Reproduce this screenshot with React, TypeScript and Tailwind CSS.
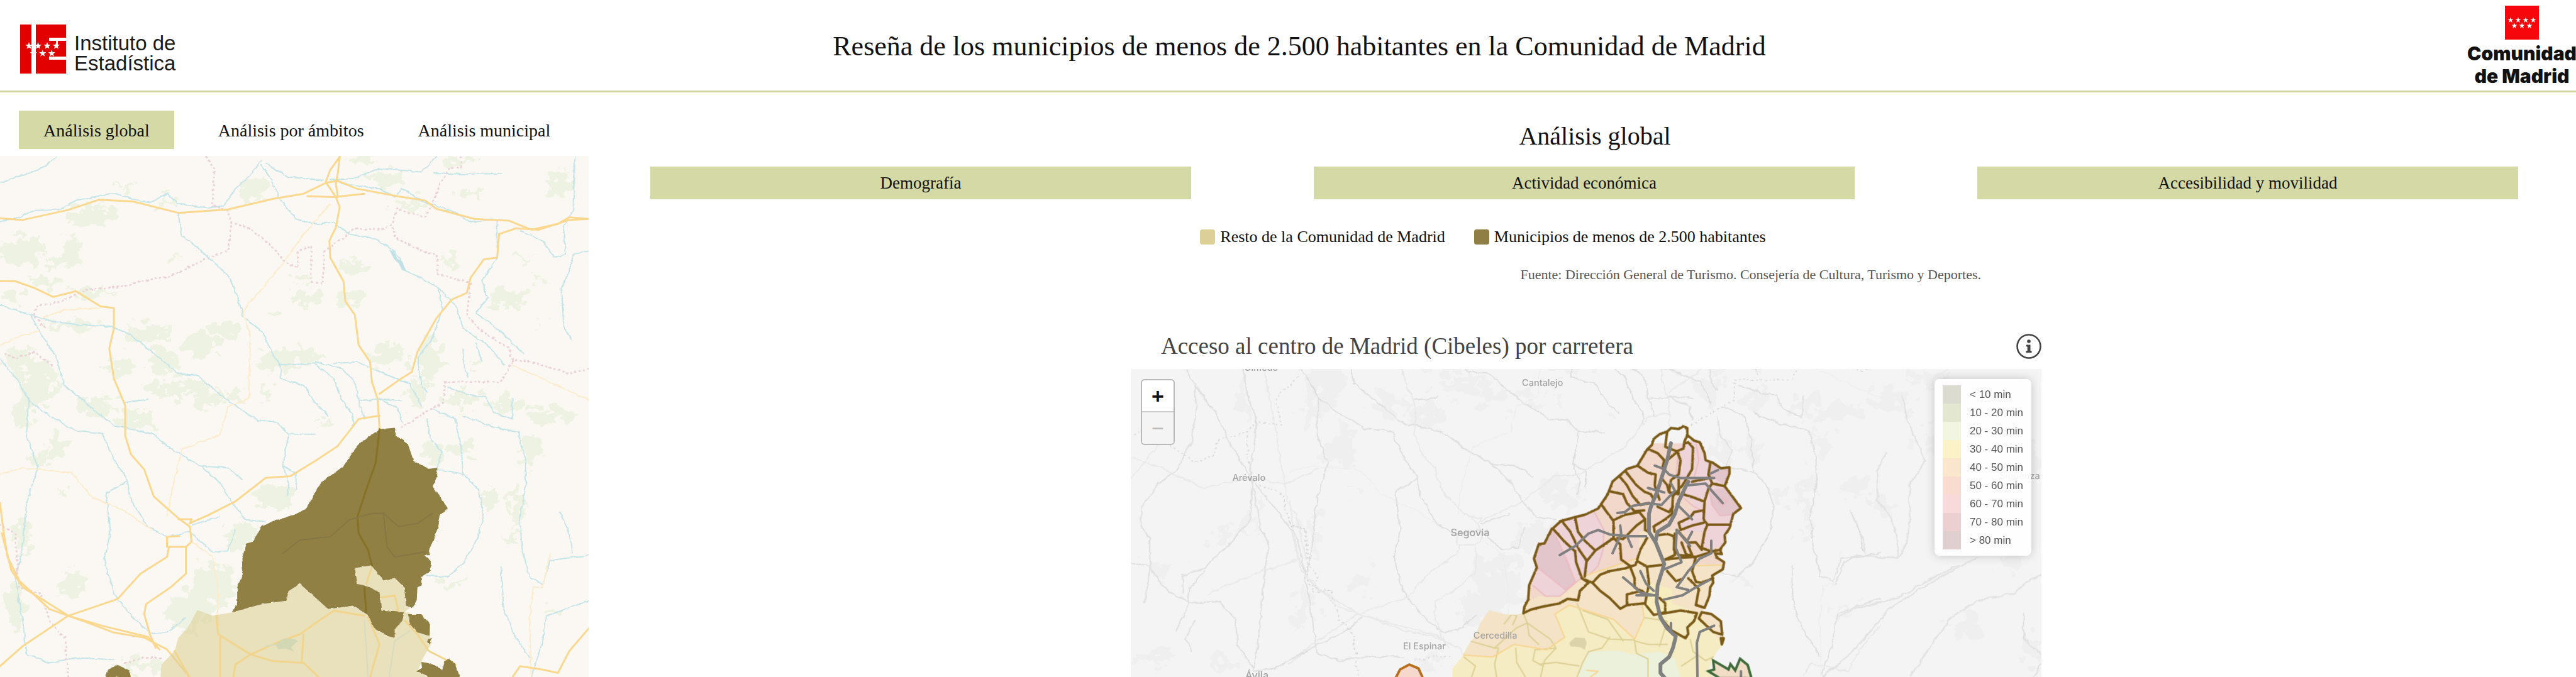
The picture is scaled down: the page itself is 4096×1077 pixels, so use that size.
import React from "react";

const serif = "font-['Liberation_Serif',serif]";

const rivers = [
  "0,97 60,75 110,55 150,20",
  "0,213 40,205 90,180 160,175 200,150 300,128 360,150 400,155 440,130 470,160 550,172 590,165 620,115 660,75 690,30",
  "470,190 478,255 520,290 570,340 605,380 630,450 640,495 690,540 720,610 740,640",
  "690,45 710,80 740,150 780,205 830,220 880,215 920,250 990,265 1040,300 1070,360 1150,405 1200,460 1220,530 1290,585 1330,640",
  "0,460 80,490 140,510 210,520 290,525 340,545 400,600 470,665 520,670 600,745 680,805 730,810 760,845 830,845",
  "80,490 105,540 150,620 170,700 240,765 300,820 400,843 460,895 530,940 580,990 610,1045 650,1100 700,1105",
  "0,620 50,690 75,745 130,790 200,835 270,845 300,920 335,980 345,1040 390,1120 440,1150 500,1135 560,1195 600,1190 620,1130",
  "75,745 70,850 100,940 70,1050 60,1180 40,1280 60,1400 70,1500 130,1525 200,1510 300,1515",
  "335,985 280,1020 290,1140 275,1220 300,1320 350,1390 400,1440 440,1435 490,1390",
  "740,640 740,680 800,700 830,750 865,790",
  "740,640 830,635 880,680 900,740 930,790 930,820",
  "830,630 900,650 935,690 945,745 960,800",
  "880,635 940,630 1000,660 1080,695 1110,760",
  "945,745 1000,740 1060,745",
  "1155,415 1165,470 1140,560 1100,620 1110,700 1125,720",
  "1310,210 1310,320 1270,390 1285,440 1255,485 1320,540 1380,605",
  "1515,20 1510,180 1485,230 1490,310 1460,320 1430,270 1370,240",
  "1553,300 1510,310 1500,360 1480,410 1485,520 1505,565",
  "870,90 930,85 1000,55 1110,65 1150,20",
  "700,40 760,80 850,90",
  "1145,68 1230,72 1320,70",
  "900,100 1000,115 1040,140 1060,115 1110,150 1200,185 1240,215 1310,205",
  "1180,705 1240,730 1280,735 1300,780 1350,800 1350,740",
  "1140,770 1200,800 1215,880 1220,960 1260,1010 1275,1080 1260,1150 1220,1230 1180,1270 1125,1265",
  "1220,790 1290,820 1365,840 1385,920 1385,1000 1370,1100 1375,1180 1395,1270 1430,1290 1450,1220 1553,1205",
  "1125,800 1135,860 1165,900 1150,950 1220,965",
  "1320,1240 1325,1360 1350,1430 1395,1510",
  "1553,1340 1440,1385 1430,1460 1400,1568",
  "760,850 745,940 780,960 780,1010",
  "745,940 762,990 757,1030",
  "530,940 600,945 640,980",
  "505,1115 580,1090",
  "330,750 390,742",
  "1475,1075 1500,1140 1508,1200",
  "1220,590 1222,640 1235,675",
  "1255,575 1270,630",
  "1000,740 1050,770 1060,810",
];

const roads = [
  "0,203 60,208 180,178 260,148 350,153 470,187 600,177 720,145 800,130 860,97 890,92 940,115 1050,138 1120,150 1150,175 1250,205 1340,210 1400,237 1470,220 1500,200 1553,205",
  "895,20 870,60 858,95 885,140 895,170 885,230 868,270 870,320 905,390 910,450 935,490 945,580 975,630 980,690 995,740 1000,830",
  "895,20 890,70 885,100 890,140",
  "0,390 40,390 90,410 140,437 200,420 265,465 300,470 300,530 288,590 300,680 330,760 330,850 345,905 380,950 405,1030 470,1095 500,1120 505,1165 490,1180 445,1180 440,1210 370,1260 310,1335 180,1385 60,1475 0,1535",
  "470,1098 505,1098 500,1110 550,1085 620,1045 700,975 765,970 830,925 890,880 945,800 1000,790",
  "1000,725 1050,685 1085,660 1100,600 1150,500 1190,445 1230,425 1240,380 1275,325 1310,320 1315,250 1360,233 1420,237 1500,208 1553,205",
  "0,1050 10,1140 20,1210 50,1280 130,1365 230,1405 300,1435 380,1450 440,1485 480,1540 500,1568",
  "5,1140 30,1250 60,1300 180,1385 270,1415 390,1448 420,1485",
  "490,1180 490,1260 450,1300 385,1350 380,1380 395,1440 410,1480",
  "440,1180 440,1150 472,1148",
  "810,137 880,140 960,130",
  "1350,1568 1370,1535 1430,1545 1470,1555 1500,1490 1553,1420",
];

const minorRoads = [
  "870,160 800,250 750,330 700,400 640,480 660,560 655,740 600,765 580,845 480,890 455,1000 440,1090",
  "0,580 60,550 105,540",
  "110,500 170,475 260,470",
  "0,965 60,945 190,960 240,1030 330,1075 400,1130",
  "1350,640 1430,680 1553,745",
  "500,1160 560,1210 575,1300 575,1440",
  "1400,1568 1395,1400 1405,1300 1430,1300 1450,1200",
];

const borders = [
  "545,20 565,60 560,165 600,180 610,220 600,300 550,320 450,375 370,390 330,405 230,415 160,450 95,465 90,495 120,530",
  "135,640 90,600 40,620 5,600",
  "610,215 660,235 700,270 760,340 785,350 785,300 820,285 820,390 850,400 855,300 900,265 930,235 1010,235 1035,220 1045,175 1120,200 1140,160 1160,100 1185,55 1215,50 1215,20",
  "1035,230 1040,260 1110,300 1150,310 1155,370 1240,395 1230,490 1270,540 1340,590 1350,625 1400,630 1500,665 1553,650",
  "1350,630 1320,690 1170,690 1170,750 1120,780 1050,830",
  "0,1115 40,1140 50,1300 110,1320 130,1400 170,1450 180,1568",
  "330,1525 380,1510 430,1510",
];

// cx, cy, rx, ry
const woods = [
  [60, 300, 60, 42], [240, 195, 70, 30], [190, 300, 30, 40], [120, 390, 36, 16], [35, 430, 26, 16], [245, 425, 60, 12],
  [190, 520, 80, 15], [100, 690, 48, 70], [50, 620, 40, 34], [385, 545, 66, 26], [430, 630, 36, 42], [530, 580, 50, 36],
  [600, 530, 40, 24], [760, 615, 80, 26], [715, 640, 32, 18], [320, 640, 40, 28], [450, 710, 64, 24], [545, 740, 40, 26],
  [260, 760, 56, 24], [360, 800, 50, 28], [150, 880, 20, 50], [100, 920, 30, 20], [60, 780, 22, 50], [670, 120, 32, 36],
  [1010, 85, 50, 22], [1080, 160, 54, 12], [1240, 130, 34, 14], [1480, 100, 36, 42], [1190, 325, 18, 24], [1340, 440, 45, 26],
  [930, 345, 30, 22], [930, 440, 42, 20], [810, 440, 42, 20], [790, 385, 22, 14], [1020, 610, 46, 36], [1130, 620, 38, 58],
  [1220, 740, 45, 20], [1340, 760, 46, 24], [1450, 790, 60, 26], [1400, 890, 22, 50], [1215, 890, 36, 18], [1100, 720, 28, 45],
  [720, 1030, 56, 38], [640, 1150, 44, 46], [560, 1290, 60, 60], [500, 1370, 55, 60], [40, 1360, 24, 70], [190, 1290, 30, 42],
  [1140, 900, 28, 38], [1290, 1040, 18, 34], [1360, 1060, 20, 60], [60, 1150, 20, 50], [370, 1530, 50, 18], [1190, 1290, 32, 11],
  [1460, 1370, 22, 10], [430, 155, 30, 11], [330, 105, 22, 7], [460, 318, 11, 9], [720, 490, 24, 14], [1380, 320, 24, 8],
  [1415, 390, 9, 12], [1415, 520, 9, 14], [620, 730, 22, 24], [850, 810, 14, 12], [700, 720, 12, 24], [170, 1020, 9, 9],
  [1345, 1160, 24, 12], [950, 30, 36, 11], [1210, 30, 46, 10], [1250, 640, 9, 14], [150, 330, 26, 14], [520, 700, 22, 18],
];

const olive =
  "611,1375 625,1345 625,1300 640,1260 637,1215 650,1170 665,1165 690,1120 720,1103 775,1085 805,1068 845,990 905,940 935,890 950,870 1000,830 1040,826 1045,850 1075,875 1090,925 1130,948 1152,945 1152,970 1140,1000 1180,1065 1160,1085 1155,1120 1140,1165 1130,1190 1133,1205 1118,1205 1135,1222 1135,1250 1110,1270 1110,1295 1100,1300 1098,1340 1085,1362 1070,1355 1065,1300 1040,1272 1010,1280 980,1235 935,1243 942,1290 975,1300 1000,1315 1005,1370 1065,1375 1060,1400 1040,1425 1040,1450 1020,1445 985,1420 970,1383 930,1355 865,1365 805,1305 790,1290 760,1312 755,1340 690,1350";

const oliveBits = [
  "1075,1380 1110,1380 1133,1410 1132,1445 1100,1435 1080,1410",
  "1130,1455 1138,1450 1133,1470 1127,1465",
  "1097,1550 1112,1540 1110,1522 1140,1528 1165,1547 1172,1520 1183,1513 1200,1530 1212,1568 1130,1568",
  "278,1568 285,1545 310,1531 340,1548 343,1568",
];

const sand =
  "520,1368 560,1385 611,1375 690,1350 755,1340 760,1312 790,1290 805,1305 865,1365 930,1355 970,1383 985,1420 1020,1445 1040,1450 1040,1425 1060,1400 1065,1375 1080,1375 1080,1410 1100,1435 1132,1445 1138,1465 1115,1510 1100,1550 1130,1568 423,1568 425,1530 460,1490 470,1450 495,1420";

const sandEnclave =
  "935,1243 980,1235 1010,1280 1040,1272 1065,1300 1070,1355 1080,1362 1065,1375 1005,1370 1000,1315 975,1300 942,1290";

const westLines = [
  "210,215 240,280 245,370 230,520 185,650 120,720 65,820 65,900 95,960 95,1100 75,1240",
  "395,215 410,330 440,430 430,560 420,650 425,760 420,870 360,970 270,1090 200,1120 200,1200",
  "240,290 310,410 360,560 420,690 500,830 570,950 600,1120",
  "30,1070 90,1080 150,1190 220,1240 320,1240 370,1310 380,1430 430,1530",
  "430,740 450,900 480,990 460,1150 455,1280 440,1450 430,1540 500,1530 620,1440 740,1360 780,1300",
  "220,1240 180,1360",
  "270,1100 220,1180 215,1240",
  "240,1320 210,1400 230,1450",
];

const westFaint = [
  "30,600 80,620 270,735 420,690 530,720 640,650",
  "30,700 120,550",
  "465,215 500,470 540,800 570,860 600,1050",
  "280,1200 440,1110 580,1050",
];

const westDots = [
  "30,510 70,480",
  "160,550 240,620 300,600 310,530 410,490 440,440 520,460 500,340 580,240",
  "410,490 410,600 420,640",
  "450,720 520,760 550,900 600,920 610,1080 640,1120 620,1190 690,1190",
];

const eastLines = [
  "1035,330 1060,460 1110,620 1060,720 1060,900 1050,980 1025,1045 890,1030 850,1060 820,1160",
  "985,580 955,660 955,790 1000,860 1020,950 1025,1040",
  "870,840 910,960 915,1020",
  "830,1300 880,1270 1020,1220 1110,1150 1220,1075",
  "780,1568 880,1450 1000,1260 1130,1150 1280,1040",
  "1060,1568 1130,1430 1200,1300 1280,1230 1400,1200 1450,1140 1500,1120",
  "1430,1290 1430,1400 1500,1480 1460,1568",
];

const greyWest = [
  [130, 1100, 45, 36], [330, 950, 36, 36], [400, 350, 18, 110], [720, 560, 46, 56], [100, 1480, 56, 36], [320, 1500, 46, 30],
  [1200, 1150, 50, 110], [420, 880, 20, 70],
];

const greyEast = [
  [1000, 350, 70, 44], [1120, 520, 30, 50], [880, 730, 46, 40], [960, 820, 46, 40], [1380, 1050, 46, 46], [1250, 1350, 50, 50],
  [1460, 1450, 46, 56], [1110, 260, 60, 22], [1440, 600, 36, 80],
];

// limits of the region, clockwise from the western corner
const province =
  "250,1155 255,1120 275,1080 280,1000 320,900 305,850 330,770 360,765 395,690 445,640 520,618 570,605 640,570 690,490 715,420 790,350 845,330 895,240 920,215 930,180 960,155 1000,140 1020,120 1060,125 1085,110 1105,120 1105,160 1140,190 1170,200 1195,260 1200,300 1240,315 1280,345 1325,340 1325,375 1300,445 1345,510 1385,568 1345,600 1325,680 1300,720 1303,760 1275,800 1285,825 1250,820 1260,845 1297,870 1290,910 1235,945 1240,985 1225,1010 1220,1060 1195,1130 1170,1150 1235,1160 1285,1210 1290,1270 1300,1320 1260,1370 1235,1420 1215,1480 1240,1514 -120,1514 -120,1464 -72,1400 -32,1324 0,1280 25,1210 72,1138 150,1160 210,1165";

const northEdge =
  "250,1155 255,1120 275,1080 280,1000 320,900 305,850 330,770 360,765 395,690 445,640 520,618 570,605 640,570 690,490 715,420 790,350 845,330 895,240 920,215 930,180 960,155 1000,140 1020,120 1060,125 1085,110 1105,120 1105,160 1140,190 1170,200 1195,260 1200,300 1240,315 1280,345 1325,340 1325,375 1300,445 1345,510 1385,568 1345,600 1325,680 1300,720 1303,760 1275,800 1285,825 1250,820 1260,845 1297,870 1290,910 1235,945 1240,985 1225,1010 1220,1060 1195,1125 1150,1110";

const bands = [
  { fill: "#f4e3c7", points: "-150,1390 90,1400 200,1330 370,1360 465,1290 415,1160 490,1110 720,1190 830,1300 880,1180 870,1110 1000,1100 1030,1100 1160,1150 1300,1340 1400,1340 1400,0 -150,0" },
  { fill: "#f1d8ca", points: "250,1100 330,1060 440,1060 560,950 850,845 855,700 900,690 960,700 1050,690 1060,800 1150,880 1400,885 1400,200 600,200 200,700" },
  { fill: "#eed3d8", points: "300,1000 365,1060 440,1060 550,960 640,890 670,830 660,650 620,590 530,600 400,670 290,800" },
  { fill: "#e3c5cc", points: "400,690 440,770 520,980 470,1025 330,905 300,850 320,740" },
  { fill: "#eed3d8", points: "1060,240 1045,400 1100,420 1090,500 1140,540 1140,580 1060,650 1100,700 1190,700 1180,790 1300,780 1400,560 1330,330 1200,310 1150,190 1060,205" },
  { fill: "#e3c5cc", points: "1215,470 1310,450 1390,568 1345,605 1275,610 1230,550" },
  { fill: "#e3c5cc", points: "1215,320 1325,335 1300,440 1215,380" },
  { fill: "#f6ecbe", points: "890,980 960,1000 1025,1020 1025,1130 960,1160 885,1110" },
  { fill: "#ecf1dc", points: "590,1370 740,1365 820,1385 960,1370 1040,1410 1070,1514 530,1514" },
  { fill: "#f4f4f4", points: "900,0 1120,0 1120,205 900,205" },
];

const softBorders = [
  "270,1210 390,1300 420,1350 360,1420 340,1512",
  "530,1100 560,1180 590,1260 700,1300 830,1305",
  "250,1155 270,1210 280,1280 330,1330",
  "-30,1310 100,1350 120,1350 100,1440 110,1512",
  "100,1350 210,1240 270,1210",
  "150,1215 190,1160 215,1170 195,1220",
  "210,1350 215,1430 260,1512",
  "420,1350 310,1360 300,1420 350,1450",
  "590,1370 560,1430 530,1512",
  "830,1310 840,1380 900,1410 900,1512",
  "1000,1330 900,1330 830,1310",
  "560,1140 690,1190 770,1310",
  "1120,1300 1135,1370 1200,1420 1240,1400",
  "700,1290 660,1350 590,1370",
  "1075,1450 1160,1390",
  "880,1180 1000,1200 960,1340",
  "-60,1400 0,1450 -20,1512",
  "340,1440 420,1430 540,1450",
];

const limits = [
  "250,1155 290,1135 345,1120 440,1100 480,1075 535,1083 545,1030 590,985 555,960",
  "410,690 460,750 520,810 525,870 555,960 610,985 650,940 700,920 780,905 835,885 860,800 895,735",
  "450,640 495,700 540,800 580,860 570,950",
  "520,620 535,700 570,750 625,805 580,865",
  "625,805 680,765 720,735",
  "655,545 685,590 720,640 720,735 755,770 760,855 805,890",
  "705,475 770,490 790,540 830,585 880,580",
  "720,635 780,605 855,590 885,630 840,665 790,720 770,740 740,735",
  "885,630 885,690 905,700",
  "755,395 790,440 820,500 860,550 905,540",
  "785,365 840,440 880,475 915,490 930,520",
  "845,330 900,370 940,380 935,440 960,520",
  "905,240 950,260 985,300 975,345",
  "1000,140 995,180 990,225 1050,250 1085,235 1090,195 1105,160",
  "1050,255 1000,300 985,340",
  "1055,260 1070,300 1060,380 1020,410 1010,470 1030,500 1080,440 1130,350 1135,230 1110,200 1090,205",
  "970,400 1000,440 1010,480 1060,490",
  "1060,410 1060,480",
  "1225,315 1215,380 1235,430 1300,445",
  "1215,400 1130,420",
  "1235,430 1215,460 1195,530 1190,630 1210,660 1330,660",
  "1080,490 1130,505 1190,530",
  "1210,660 1195,700 1180,790 1230,810 1280,800",
  "1190,580 1140,590 1120,620 1060,650 1070,690 1130,665 1190,650",
  "1030,500 1025,600 990,630 930,670 935,700",
  "1040,710 1035,800 1060,830 1150,840 1240,810",
  "1050,690 1110,760 1150,760 1180,800",
  "1075,760 1100,830 1130,830 1110,780",
  "950,560 1010,590 1030,560",
  "945,720 1000,712 1035,725 1040,830 990,855",
  "845,865 895,895 975,885",
  "805,890 830,960 830,1010 880,1040",
  "895,900 905,990 885,1100 790,1110 790,1050 870,1030",
  "610,985 650,1030 700,1070 755,1130 790,1110",
  "885,1105 930,1165 990,1150 990,1100 960,1070",
  "990,855 1075,845 1150,840 1130,920 1150,980 1180,985 1240,960",
  "1000,920 1045,975 1080,965",
  "1110,960 1165,1020 1150,1110 1195,1125",
  "960,1160 1070,1140 1155,1155 1140,1200 1105,1235 1110,1270 1095,1295 1020,1250 980,1200 960,1160",
  "1180,1150 1230,1160 1280,1200 1287,1275 1240,1260 1200,1220 1165,1185 1180,1150",
  "1280,1295 1295,1295 1285,1330 1280,1295",
];

const mainRoads = [
  "1020,205 1000,300 985,350 950,470 915,560 905,600 905,700 940,760 985,880 950,1000 945,1090 965,1180 1000,1240 1045,1285 1030,1350 1010,1400 965,1440 965,1490 985,1514",
  "1110,420 1100,440 1060,530 1040,600 1010,660 950,700 940,750",
];

const access = [
  "1245,400 1130,400 1070,400 1010,380 985,350 935,330",
  "440,830 520,780 590,710 640,690 700,715 800,725 890,725",
  "740,595 780,590 820,555 900,540 970,550 1040,470 1020,430",
  "900,455 985,480",
  "1050,545 1130,630",
  "1110,440 1200,430 1240,480 1290,540",
  "1225,375 1265,355",
  "980,1080 1080,1055 1150,1010 1220,970",
  "770,955 820,1000 860,1040 930,1055",
  "840,1055 940,1055",
  "860,920 890,990 930,1030",
  "1230,750 1230,820 1170,850 1110,920 1050,1010 1110,1025",
  "985,910 1075,870 1045,790 1050,690 1120,780",
  "1130,700 1105,750",
  "1245,1225 1170,1260 1155,1320 1158,1514",
  "755,665 760,710 740,760 715,820",
  "795,735 815,785",
  "1020,1210 1020,1250",
  "1385,1480 1385,1514",
];

const places = [
  { name: "Olmedo", x: 2351, y: 694, size: 17 },
  { name: "Cantalejo", x: 2875, y: 722, size: 17 },
  { name: "Arévalo", x: 2328, y: 899, size: 17 },
  { name: "Segovia", x: 2740, y: 1002, size: 19 },
  { name: "El Espinar", x: 2655, y: 1213, size: 17 },
  { name: "Cercedilla", x: 2787, y: 1192, size: 17 },
  { name: "Ávila", x: 2343, y: 1268, size: 19 },
  { name: "Sigüenza", x: 3764, y: 895, size: 17 },
];

const ranges = [
  { label: "< 10 min", color: "bg-[#dbdccf]" },
  { label: "10 - 20 min", color: "bg-[#e3e7d0]" },
  { label: "20 - 30 min", color: "bg-[#f2f6e0]" },
  { label: "30 - 40 min", color: "bg-[#fcf2c8]" },
  { label: "40 - 50 min", color: "bg-[#fae6cc]" },
  { label: "50 - 60 min", color: "bg-[#f9dccf]" },
  { label: "60 - 70 min", color: "bg-[#f8dadb]" },
  { label: "70 - 80 min", color: "bg-[#eccfd0]" },
  { label: "> 80 min", color: "bg-[#dfcfce]" },
];

const Lines = ({ list, color, width, dash }: { list: string[]; color: string; width: number; dash?: string }) => (
  <g fill="none" stroke={color} strokeWidth={width} strokeDasharray={dash} strokeLinejoin="round" strokeLinecap="round">
    {list.map((points) => (
      <polyline key={points} points={points} vectorEffect="non-scaling-stroke" />
    ))}
  </g>
);

const Patches = ({ list, color }: { list: number[][]; color: string }) => (
  <g fill={color}>
    {list.map(([cx, cy, rx, ry]) => (
      <ellipse key={`${cx}-${cy}`} cx={cx} cy={cy} rx={rx} ry={ry} />
    ))}
  </g>
);

const Rough = ({ id, scale, freq }: { id: string; scale: number; freq: number }) => (
  <filter id={id} x="-5%" y="-5%" width="110%" height="110%">
    <feTurbulence type="fractalNoise" baseFrequency={freq} numOctaves={4} seed={4} />
    <feDisplacementMap in="SourceGraphic" scale={scale} xChannelSelector="R" yChannelSelector="G" />
  </filter>
);

const star = "0,-10 2.4,-3.2 9.5,-3.1 3.8,1.2 5.9,8.1 0,4 -5.9,8.1 -3.8,1.2 -9.5,-3.1 -2.4,-3.2";

const Stars = ({ x, y, gap, row, size }: { x: number; y: number; gap: number; row: number; size: number }) => (
  <g fill="#fff">
    {[0, 1, 2, 3].map((i) => (
      <polygon key={i} points={star} transform={`translate(${x + i * gap} ${y}) scale(${size})`} />
    ))}
    {[0, 1, 2].map((i) => (
      <polygon key={i} points={star} transform={`translate(${x + gap / 2 + i * gap} ${y + row}) scale(${size})`} />
    ))}
  </g>
);

const Header = () => {
  return (
    <header className="flex h-[147px] shrink-0 items-center border-b-[3px] border-[#d0d6a2] pl-8">
      <div className="mt-3 flex h-[78px] items-end gap-[13px]">
        <svg className="h-[78px] w-[73px]" viewBox="0 0 73 78" aria-hidden="true">
          <path d="M0 0h18v78H0zM25 0h48v78H25z" fill="#e20000" />
          <path d="M46 21h27v5H46zM46 51h27v5H46zM57 21h3v14h-3z" fill="#fff" />
          <Stars x={14} y={34} gap={14.5} row={12} size={0.6} />
        </svg>
        <p className="w-[164px] whitespace-nowrap font-['Liberation_Sans',sans-serif] text-[33px] leading-8 text-[#1a1a1a]">
          Instituto de
          <br />
          Estadística
        </p>
      </div>
      <h1 className="flex-1 pr-[74px] pt-1 text-center text-[44px] leading-[52px]">
        Reseña de los municipios de menos de 2.500 habitantes en la Comunidad de Madrid
      </h1>
      <div className="flex w-[172px] flex-col items-center pt-1">
        <svg className="h-[54px] w-[54px]" viewBox="0 0 54 54" aria-hidden="true">
          <path d="M0 0h54v54H0z" fill="#f7060b" />
          <Stars x={9} y={23} gap={12} row={9} size={0.48} />
        </svg>
        <p className="mt-1 whitespace-nowrap text-center font-['Inter',sans-serif] text-[30px] font-black leading-9">
          Comunidad
          <br />
          de Madrid
        </p>
      </div>
    </header>
  );
};

const OverviewMap = () => {
  return (
    <svg className="min-h-0 w-full flex-1 bg-[#fbf8f3]" viewBox="0 291 1098 973" preserveAspectRatio="xMinYMin slice" role="img" aria-label="Mapa de municipios">
      <defs>
        <Rough id="woods" scale={85} freq={0.035} />
        <Rough id="water" scale={9} freq={0.06} />
        <Rough id="coast" scale={6} freq={0.06} />
      </defs>
      <g transform="translate(0 280) scale(.7079 .6276)">
        <g filter="url(#woods)">
          <Patches list={woods} color="#edf2e3" />
        </g>
        <g filter="url(#water)">
          <Lines list={rivers} color="#c6e5e8" width={2} />
          <Lines list={minorRoads} color="#fdebcb" width={2} />
          <Lines list={borders} color="#ecd2d8" width={3} dash="1 6" />
        </g>
        <path d="M1025 295l14 8 8 20 14 10 8 28-10-4-8-20-12-12z" fill="#c0e2e7" />
        <Lines list={roads} color="#fbd88f" width={3} />
        <g fill="#ddd097" fillOpacity={0.6}>
          <polygon points={sand} />
          <polygon points={sandEnclave} />
        </g>
        <Lines
          list={[
            "570,1385 575,1440 660,1500 740,1460 790,1440 840,1400 880,1370 960,1385",
            "660,1500 620,1530 615,1568",
            "580,1450 580,1568",
            "660,1500 720,1520 800,1525 840,1568",
            "800,1440 795,1520",
            "970,1390 1000,1470 975,1568",
            "1068,1400 1100,1440 1130,1490 1200,1530",
            "460,1490 500,1568",
            "980,1240 965,1290",
            "1005,1330 1040,1325 1050,1370",
          ]}
          color="#f2d58c"
          width={3}
        />
        <Lines list={["960,1400 965,1480 970,1568", "1080,1430 1040,1460 1025,1568", "700,1475 740,1470"]} color="#d5dcc2" width={2} />
        <path d="M725 1470l25-18 25 2 10 6-18 18 8 14-22-10-20 2z" fill="#d2d8b4" />
        <g fill="#8b7a3a" fillOpacity={0.95} filter="url(#coast)">
          <polygon points={olive} />
          {oliveBits.map((points) => (
            <polygon key={points} points={points} />
          ))}
        </g>
        <Lines list={["1000,830 990,930 965,1010 942,1090 945,1140 970,1190 980,1235", "960,1300 965,1375"]} color="#867126" width={3} />
        <Lines
          list={["745,1200 790,1160 870,1150 920,1100 980,1080 1010,1080 1020,1180 1040,1210 1120,1195", "1010,1080 1050,1120 1100,1110 1140,1080"]}
          color="#857745"
          width={2}
        />
      </g>
    </svg>
  );
};

const AccessMap = () => {
  return (
    <div className="relative min-h-0 flex-1 bg-[#f4f4f4]">
      <svg className="h-full w-full" viewBox="2108 690 1706 574" preserveAspectRatio="xMinYMin slice" role="img" aria-label="Mapa de accesos">
        <defs>
          <clipPath id="region">
            <polygon points={province} />
          </clipPath>
          <Rough id="patches" scale={80} freq={0.035} />
          <Rough id="streams" scale={9} freq={0.06} />
          <Rough id="edges" scale={7} freq={0.09} />
        </defs>
        <g filter="url(#patches)">
          <g transform="translate(2404 277) scale(.7079 .6276)">
            <Patches list={woods} color="#efefef" />
          </g>
          <g transform="translate(2090 600) scale(.574 .4235)">
            <Patches list={greyWest} color="#efefef" />
          </g>
          <g transform="translate(2950 600) scale(.574 .4235)">
            <Patches list={greyEast} color="#efefef" />
          </g>
        </g>
        <g filter="url(#streams)">
          <g transform="translate(2404 277) scale(.7079 .6276)">
            <Lines list={rivers} color="#dfdfdf" width={2} />
            <Lines list={roads} color="#e8e8e8" width={2} />
            <Lines list={minorRoads} color="#ebebeb" width={1} />
            <Lines list={borders} color="#d8d8d8" width={2} dash="1 6" />
          </g>
          <g transform="translate(2090 600) scale(.574 .4235)">
            <Lines list={westLines} color="#dfdfdf" width={2} />
            <Lines list={westFaint} color="#e9e9e9" width={2} />
            <Lines list={westDots} color="#d8d8d8" width={2} dash="1 6" />
          </g>
          <g transform="translate(2950 600) scale(.574 .4235)">
            <Lines list={eastLines} color="#dfdfdf" width={2} />
          </g>
        </g>
        <g transform="translate(2750 760) scale(.3571 .3333)">
          <g clipPath="url(#region)">
            <polygon points={province} fill="#f5ecc4" />
            {bands.map((band) => (
              <polygon key={band.points} points={band.points} fill={band.fill} />
            ))}
            <path d="M490 1320l30-30 50 5 10 25-10 40-25-15-50-5z" fill="#dcd3aa" />
            <Lines list={softBorders} color="#dccf92" width={2} />
            <Lines
              list={[
                "300,1000 365,1060 440,1060 550,960",
                "400,690 440,770 520,980 470,1025 330,905",
                "470,840 520,980",
                "620,590 670,690 665,800 640,890 600,935",
                "1230,500 1235,550 1275,610 1345,605",
                "1265,530 1290,510 1310,530 1290,560 1265,530",
                "1060,240 1045,400",
                "1150,200 1165,300 1140,400",
                "1085,510 1140,560 1200,590",
              ]}
              color="#ecbcc0"
              width={2}
            />
            <Lines
              list={["560,950 700,900 850,845", "-60,1390 90,1400 200,1330 370,1360 465,1290 415,1160 490,1110 720,1190 830,1300 880,1180 870,1110", "1150,890 1290,885", "580,1475 640,1480 600,1512"]}
              color="#f8d58f"
              width={2}
            />
          </g>
          <polygon points="1275,1520 1215,1480 1245,1470 1240,1420 1320,1470 1330,1440 1355,1475 1380,1410 1420,1445 1440,1520" fill="#f1dcc6" stroke="#3f6b3a" strokeWidth={4} vectorEffect="non-scaling-stroke" />
          <g filter="url(#edges)">
            <Lines list={[northEdge]} color="#7a5a16" width={4} />
            <Lines list={limits} color="#7a5a16" width={4} />
          </g>
          <Lines list={mainRoads} color="#808080" width={6} />
          <Lines list={access} color="#808080" width={4} />
        </g>
        <g transform="translate(2090 600) scale(.574 .4235)">
          <polygon points="890,1575 905,1535 935,1513 965,1530 980,1575" fill="#f6d9cc" stroke="#b8701f" strokeWidth={4} vectorEffect="non-scaling-stroke" />
        </g>
        <g className="font-['Inter',sans-serif] font-medium" fill="#a3a3a3" textAnchor="middle">
          {places.map((place) => (
            <text key={place.name} x={place.x} y={place.y} fontSize={place.size}>
              {place.name}
            </text>
          ))}
        </g>
      </svg>

      <div className="absolute left-4 top-4 flex w-[54px] flex-col rounded-md border-2 border-[#b9b9b9] bg-white font-['Liberation_Sans',sans-serif] text-[34px] font-bold leading-[48px]">
        <button type="button" aria-label="Acercar" className="h-[51px] rounded-t border-b-2 border-[#ccc]">
          +
        </button>
        <button type="button" aria-label="Alejar" className="h-[50px] rounded-b bg-[#f4f4f4] font-normal text-[#bbb]" disabled>
          −
        </button>
      </div>

      <ul className="absolute right-4 top-4 rounded-lg bg-white/90 px-[13px] py-[10px] font-['Liberation_Sans',sans-serif] text-[17px] text-[#555] shadow-[0_0_15px_rgba(0,0,0,0.2)]">
        {ranges.map((range) => (
          <li key={range.label} className="flex h-[29px] items-center gap-[14px] whitespace-nowrap">
            <span className={`h-full w-[29px] ${range.color}`} />
            {range.label}
          </li>
        ))}
      </ul>
    </div>
  );
};

const App = () => {
  return (
    <div className={`flex h-screen flex-col overflow-hidden bg-white text-[#111] ${serif}`}>
      <Header />
      <main className="flex min-h-0 flex-1">
        <section className="flex w-[936px] shrink-0 flex-col">
          <nav className="mb-[11px] mt-[29px] flex pl-[30px] text-[28px] leading-[58px]">
            <button type="button" className="mr-[30px] bg-[#d4d9a5] px-[39px] pt-[3px]">
              Análisis global
            </button>
            <button type="button" className="mr-[10px] px-10 pt-[3px]">
              Análisis por ámbitos
            </button>
            <button type="button" className="pl-9 pt-[3px]">
              Análisis municipal
            </button>
          </nav>
          <OverviewMap />
        </section>

        <section className="ml-3 flex flex-1 flex-col">
          <h2 className="mb-6 mt-[46px] pl-7 text-center text-[40px] leading-[48px]">Análisis global</h2>
          <div className="grid grid-cols-3 gap-x-[195px] pl-[86px] pr-[92px] text-[27px] leading-[52px]">
            <button type="button" className="bg-[#d4d9a5]">
              Demografía
            </button>
            <button type="button" className="bg-[#d4d9a5]">
              Actividad económica
            </button>
            <button type="button" className="bg-[#d4d9a5]">
              Accesibilidad y movilidad
            </button>
          </div>

          <div className="mt-11 flex justify-center gap-[46px] pr-[328px] text-[26px] leading-8">
            <p className="flex items-center gap-2">
              <span className="h-6 w-6 rounded bg-[#dcd097]" />
              Resto de la Comunidad de Madrid
            </p>
            <p className="flex items-center gap-2">
              <span className="h-6 w-6 rounded bg-[#8f7f45]" />
              Municipios de menos de 2.500 habitantes
            </p>
          </div>

          <div className="mx-auto flex min-h-0 w-[46%] flex-1 flex-col">
            <p className="mt-7 pr-24 text-right text-[22px] leading-8 text-[#555]">
              Fuente: Dirección General de Turismo. Consejería de Cultura, Turismo y Deportes.
            </p>
            <div className="mb-4 mt-[78px] flex items-center justify-between pl-12 text-[#444]">
              <h3 className="text-[37px] leading-10">Acceso al centro de Madrid (Cibeles) por carretera</h3>
              <button type="button" aria-label="Información">
                <svg className="h-10 w-10" viewBox="0 0 40 40" fill="none" stroke="#444">
                  <circle cx="20" cy="20" r="18.5" strokeWidth="2.6" />
                  <circle cx="20" cy="12" r="2.8" fill="#444" stroke="none" />
                  <path d="M16 17.500h6.500v9.500h2v3h-9v-3h2.200v-6.500H16z" fill="#444" stroke="none" />
                </svg>
              </button>
            </div>
            <AccessMap />
          </div>
        </section>
      </main>
    </div>
  );
};

export default App;
